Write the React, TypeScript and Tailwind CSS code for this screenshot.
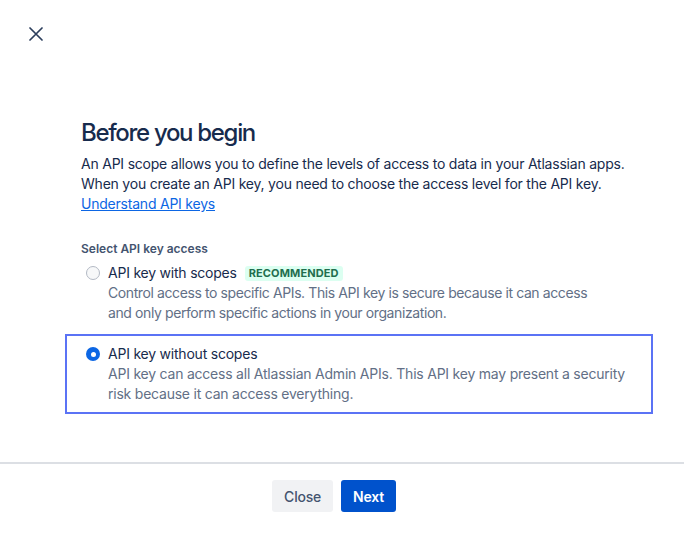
function Radio({ checked }: { checked?: boolean }) {
  return checked ? (
    <span className="mt-[3px] flex h-[14px] w-[14px] shrink-0 items-center justify-center rounded-full bg-[#0C66E4]">
      <span className="h-[5px] w-[5px] rounded-full bg-white" />
    </span>
  ) : (
    <span className="mt-[3px] h-[14px] w-[14px] shrink-0 rounded-full border border-[#B3B9C4] bg-[#F7F8F9]" />
  )
}

export default function App() {
  return (
    <div className="flex h-[533px] w-[684px] flex-col bg-white font-['Inter',sans-serif] tracking-[-0.22px] text-[#172B4D]">
      <div className="h-[119px] pl-[29px] pt-[27px]">
        <svg width="14" height="14" viewBox="0 0 14 14" fill="none" stroke="#2C3E5D" strokeWidth="1.7" strokeLinecap="round">
          <path d="M1 1 13 13M13 1 1 13" />
        </svg>
      </div>

      <div className="px-[81px]">
        <h1 className="whitespace-nowrap text-[24px] font-medium leading-[28px] tracking-[-0.055em] text-[#172B4D]">
          Before you begin
        </h1>
        <p className="mt-[7px] whitespace-nowrap text-[14px] leading-[20px] text-[#172B4D]">
          An API scope allows you to define the levels of access to data in your Atlassian apps.
          <br />
          When you create an API key, you need to choose the access level for the API key.
          <br />
          <a className="text-[#0C66E4] underline" href="#">
            Understand API keys
          </a>
        </p>
        <div className="mt-[27px] text-[12px] font-semibold leading-[16px] tracking-normal text-[#44546F]">
          Select API key access
        </div>
      </div>

      <div className="mt-[3px] pl-[65px]">
        <div className="flex gap-[8px] border-2 border-transparent px-[19px] py-[1px]">
          <Radio />
          <div className="whitespace-nowrap text-[14px] leading-[20px]">
            <div className="flex items-center gap-[8px]">
              <span>API key with scopes</span>
              <span className="rounded-[3px] bg-[#DCFFF1] px-[4px] text-[11px] font-bold leading-[15px] tracking-[0.01em] text-[#216E4E]">
                RECOMMENDED
              </span>
            </div>
            <div className="tracking-[-0.4px] text-[#626F86]">
              Control access to specific APIs. This API key is secure because it can access
              <br />
              and only perform specific actions in your organization.
            </div>
          </div>
        </div>

        <div className="mt-[8px] flex w-[588px] gap-[8px] border-2 border-[#5B73F5] px-[19px] pb-[8px] pt-[8px]">
          <Radio checked />
          <div className="whitespace-nowrap text-[14px] leading-[20px]">
            <div>API key without scopes</div>
            <div className="text-[#626F86]">
              API key can access all Atlassian Admin APIs. This API key may present a security
              <br />
              risk because it can access everything.
            </div>
          </div>
        </div>
      </div>

      <div className="mt-auto border-t-2 border-[#DCDFE4]">
        <div className="flex h-[69px] items-start justify-center gap-[8px] pr-[16px] pt-[16px]">
          <button className="h-[32px] rounded-[3px] bg-[#F1F2F4] px-[12px] text-[14px] font-medium text-[#44546F]">
            Close
          </button>
          <button className="h-[32px] rounded-[3px] bg-[#0052CC] px-[12px] text-[14px] font-semibold text-white">
            Next
          </button>
        </div>
      </div>
    </div>
  )
}
